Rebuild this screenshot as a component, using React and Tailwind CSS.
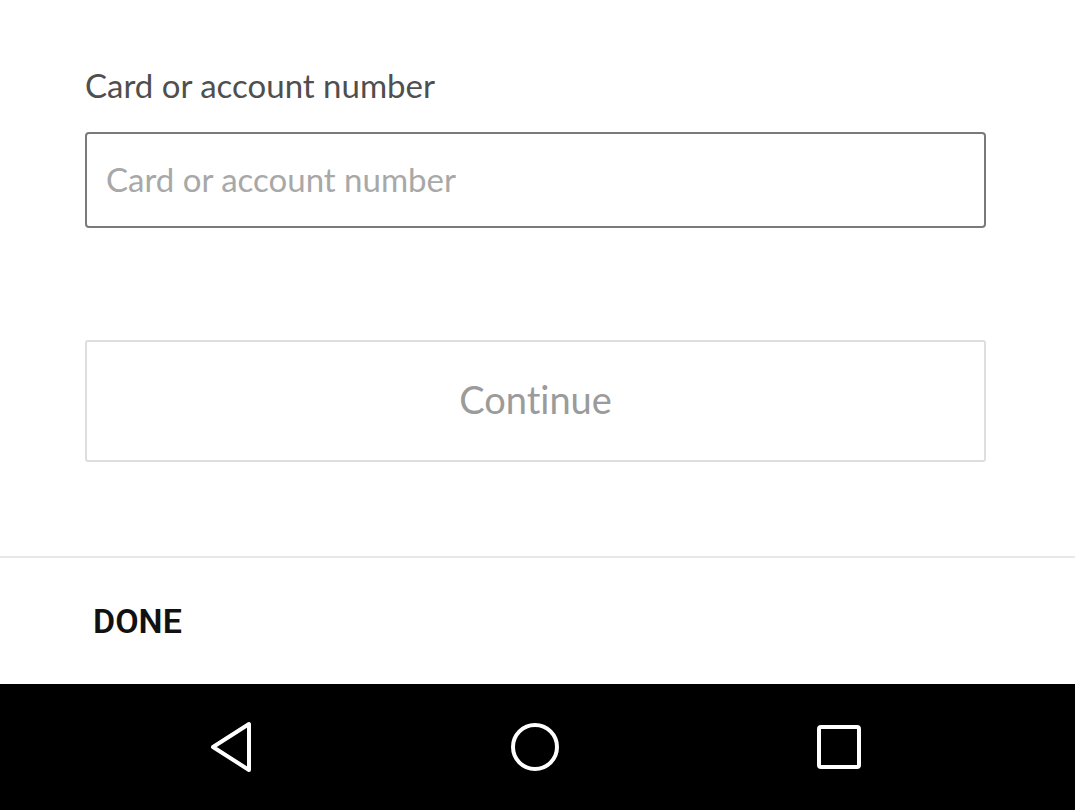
export default function App() {
  return (
    <div className="flex h-[810px] w-[1075px] flex-col bg-white" style={{ fontFamily: "Lato, 'Open Sans', sans-serif" }}>
      <div className="flex flex-1 flex-col">
        <div className="pl-[85px] pr-[89px] pt-[66px]">
          <div className="text-[33px] leading-[38px] text-[#4f4f4f] [font-variant-ligatures:none]">Card or account number</div>
          <div className="mt-[28px] flex h-[96px] items-center rounded-[4px] border-2 border-[#7a7a7a] pl-[19px]">
            <input
              className="w-full bg-transparent text-[33px] text-[#555555] outline-none placeholder:text-[#a8a8a8] [font-variant-ligatures:none]"
              placeholder="Card or account number"
              style={{ fontFamily: "Lato, sans-serif" }}
            />
          </div>
          <button className="mt-[112px] flex h-[122px] w-full items-center justify-center rounded-[3px] border-2 border-[#dedede] bg-white pb-[4px] text-[38px] text-[#9b9b9b] [font-variant-ligatures:none]">
            Continue
          </button>
        </div>
        <div className="mt-auto border-t-2 border-[#e8e8e8]">
          <div className="flex h-[126px] items-center pl-[93px]">
            <span className="text-[34px] font-semibold text-[#111111]" style={{ fontFamily: "Roboto, 'Open Sans', sans-serif" }}>
              DONE
            </span>
          </div>
        </div>
      </div>
      <div className="flex h-[126px] items-center bg-black pl-[79px]">
        <div className="flex w-[304px] justify-center">
          <svg width="48" height="56" viewBox="0 0 48 56" fill="none" stroke="#ffffff" strokeWidth="4" strokeLinejoin="round" strokeLinecap="round">
            <path d="M6 28 L42 5 L42 51 Z" />
          </svg>
        </div>
        <div className="flex w-[304px] justify-center">
          <svg width="50" height="50" viewBox="0 0 50 50" fill="none" stroke="#ffffff" strokeWidth="4">
            <circle cx="25" cy="25" r="22" />
          </svg>
        </div>
        <div className="flex w-[304px] justify-center">
          <svg width="44" height="44" viewBox="0 0 44 44" fill="none" stroke="#ffffff" strokeWidth="4">
            <rect x="2" y="2" width="40" height="40" rx="2" />
          </svg>
        </div>
      </div>
    </div>
  );
}
